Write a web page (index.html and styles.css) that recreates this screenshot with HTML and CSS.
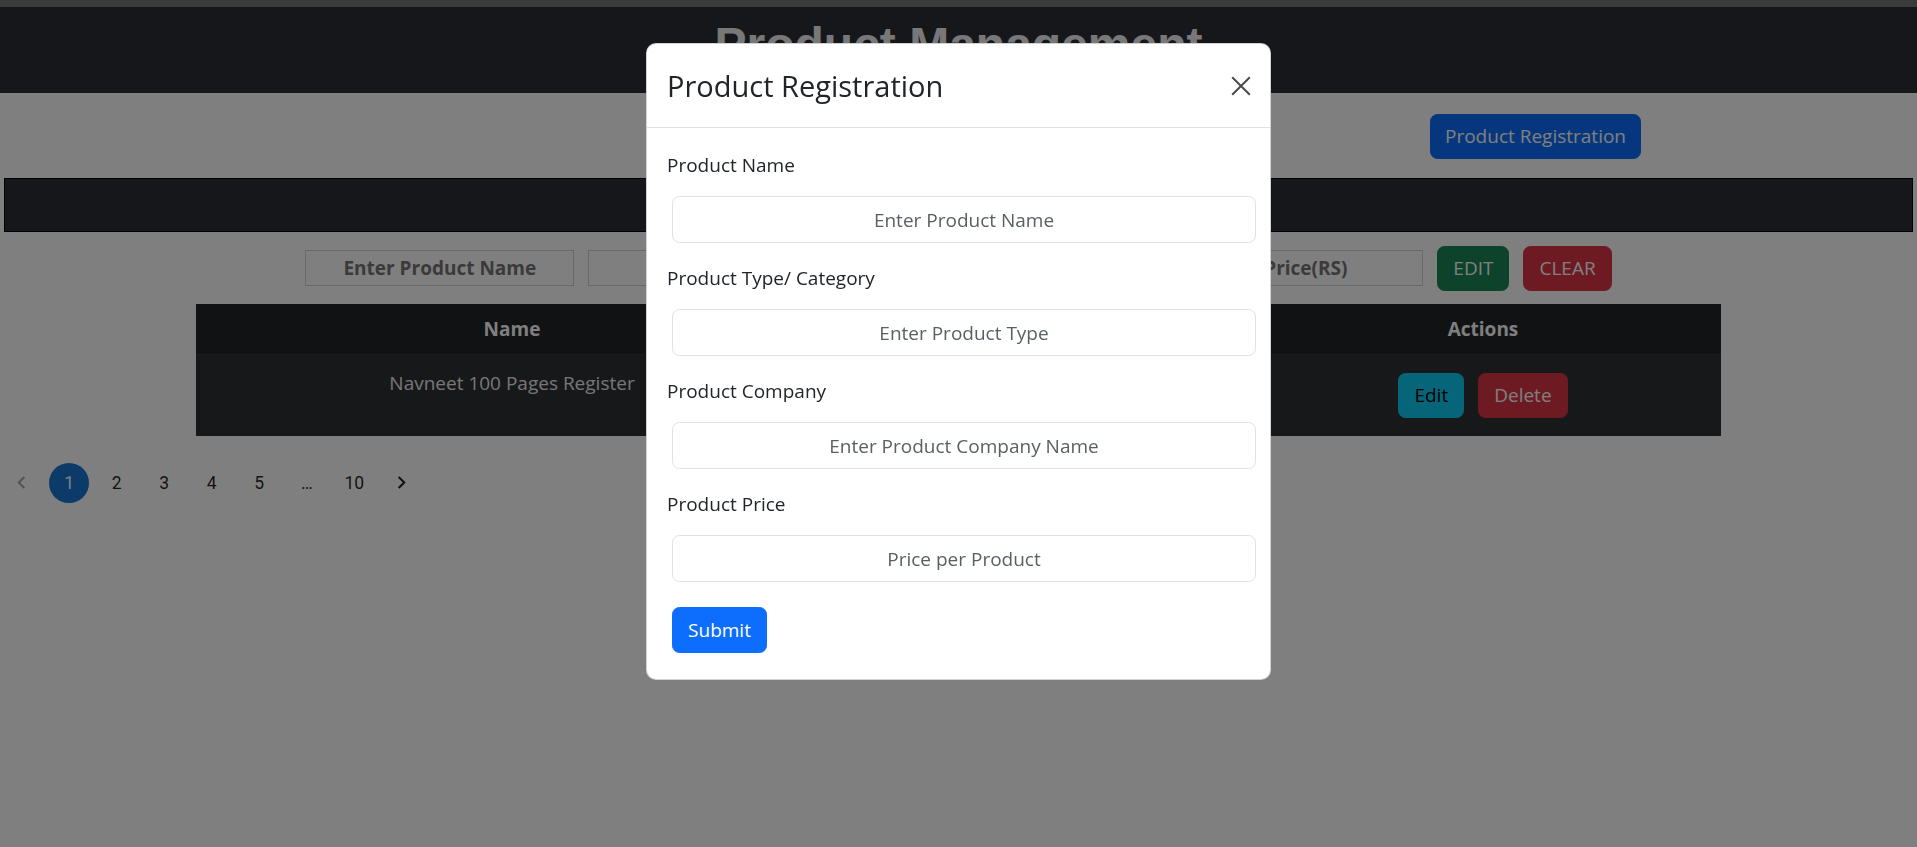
FILE: index.html
```html
<!DOCTYPE html>
<html lang="en">
<head>
<meta charset="utf-8">
<title>Product Management</title>
<link rel="stylesheet" href="styles.css">
</head>
<body>
<div class="topbar"></div>
<header class="page-header">
  <h1 class="page-title">Product Management</h1>
</header>

<div class="toolbar">
  <button class="btn btn-primary btn-register">Product Registration</button>
</div>

<div class="dark-bar"></div>

<div class="filter-row">
  <input class="filter-input" placeholder="Enter Product Name">
  <input class="filter-input" placeholder="Product Type">
  <input class="filter-input" placeholder="Company Name">
  <input class="filter-input filter-price" placeholder="Price(RS)">
  <button class="btn btn-success">EDIT</button>
  <button class="btn btn-danger">CLEAR</button>
</div>

<table class="product-table">
  <colgroup>
    <col class="col-name">
    <col class="col-mid">
    <col class="col-mid">
    <col class="col-mid">
    <col class="col-actions">
  </colgroup>
  <thead>
    <tr><th>Name</th><th>Type</th><th>Company</th><th>Price</th><th>Actions</th></tr>
  </thead>
  <tbody>
    <tr>
      <td>Navneet 100 Pages Register</td>
      <td>Stationery</td>
      <td>Navneet</td>
      <td>60</td>
      <td><div class="actions"><button class="btn btn-info">Edit</button><button class="btn btn-danger">Delete</button></div></td>
    </tr>
  </tbody>
</table>

<ul class="pagination">
  <li class="page-item disabled"><svg viewBox="0 0 24 24" class="chev"><path d="M15.41 7.41 14 6l-6 6 6 6 1.41-1.41L10.83 12z"/></svg></li>
  <li class="page-item selected">1</li>
  <li class="page-item">2</li>
  <li class="page-item">3</li>
  <li class="page-item">4</li>
  <li class="page-item">5</li>
  <li class="page-item ellipsis">…</li>
  <li class="page-item">10</li>
  <li class="page-item"><svg viewBox="0 0 24 24" class="chev"><path d="M10 6 8.59 7.41 13.17 12l-4.58 4.59L10 18l6-6z"/></svg></li>
</ul>

<div class="modal-backdrop"></div>
<div class="modal">
  <div class="modal-content">
    <div class="modal-header">
      <h4 class="modal-title">Product Registration</h4>
      <button class="btn-close" aria-label="Close">
        <svg viewBox="0 0 20 20" width="22" height="22"><path d="M2 2 L18 18 M18 2 L2 18" stroke="#4a4a4a" stroke-width="1.8" fill="none"/></svg>
      </button>
    </div>
    <form class="modal-body">
      <div class="form-group">
        <label class="form-label">Product Name</label>
        <input class="form-control" placeholder="Enter Product Name">
      </div>
      <div class="form-group">
        <label class="form-label">Product Type/ Category</label>
        <input class="form-control" placeholder="Enter Product Type">
      </div>
      <div class="form-group">
        <label class="form-label">Product Company</label>
        <input class="form-control" placeholder="Enter Product Company Name">
      </div>
      <div class="form-group">
        <label class="form-label">Product Price</label>
        <input class="form-control" placeholder="Price per Product">
      </div>
      <button type="button" class="btn btn-primary btn-submit">Submit</button>
    </form>
  </div>
</div>
</body>
</html>
```

FILE: styles.css
```css
* { box-sizing: border-box; }
html, body { margin: 0; padding: 0; }
body {
  font-family: "Open Sans", "Segoe UI", sans-serif;
  font-size: 19px;
  color: #212529;
  background: #fff;
  height: 847px;
  overflow: hidden;
}

.topbar { height: 7px; background: #757575; }

.page-header {
  background: #2c2e36;
  padding: 9px 0;
  text-align: center;
}
.page-title {
  margin: 0 0 10px;
  font-family: "Liberation Sans", Arial, sans-serif;
  font-weight: 700;
  font-size: 48px;
  line-height: 57.6px;
  color: #f0f0f0;
}

.btn {
  font-family: inherit;
  font-size: 19px;
  line-height: 29px;
  padding: 7px 15px;
  border: 1px solid transparent;
  border-radius: 7.5px;
  color: #fff;
  cursor: pointer;
}
.btn-primary { background: #0d6efd; border-color: #0d6efd; }
.btn-success { background: #198754; border-color: #198754; }
.btn-danger { background: #dc3545; border-color: #dc3545; }
.btn-info { background: #0dcaf0; border-color: #0dcaf0; color: #000; }

.toolbar {
  display: flex;
  justify-content: flex-end;
  padding-right: 276px;
  margin-top: 21px;
}
.btn-register { width: 211px; height: 45px; padding: 7px 10px; }

.dark-bar {
  margin: 19px 4px 0;
  height: 54px;
  background: #2c2e36;
  border: 1px solid #000;
}

.filter-row {
  display: flex;
  justify-content: center;
  align-items: center;
  gap: 14px;
  margin-top: 14px;
}
.filter-row .btn { height: 45px; }
.filter-input {
  width: 269px;
  height: 36px;
  border: 1px solid #d2d2d2;
  background: #fff;
  font-family: inherit;
  font-size: 19px;
  font-weight: 700;
  text-align: center;
  padding: 0 6px;
}
.filter-price { padding-left: 40px; }
.filter-input::placeholder { color: #757575; opacity: 1; }

.product-table {
  width: 1525px;
  margin: 13px auto 0;
  border-collapse: collapse;
  table-layout: fixed;
  background: #212529;
  color: #fff;
  text-align: center;
}
.col-name { width: 632px; }
.col-mid { width: 139px; }
.col-actions { width: 476px; }
.product-table th {
  padding: 10px;
  font-weight: 700;
  line-height: 30px;
  border-bottom: 1px solid #373b3e;
}
.product-table td {
  padding: 13px 10px;
  vertical-align: top;
  line-height: 30px;
  background: #2c3034;
  color: #ececec;
}
.actions {
  display: flex;
  justify-content: center;
  gap: 14px;
  margin: 5px 0;
}
.actions .btn { height: 45px; }

.pagination {
  display: flex;
  align-items: center;
  list-style: none;
  margin: 27px 0 0 -2px;
  padding: 0;
}
.page-item {
  width: 40px;
  height: 40px;
  margin: 0 3.75px;
  display: flex;
  align-items: center;
  justify-content: center;
  border-radius: 20px;
  font-family: Roboto, "Liberation Sans", sans-serif;
  font-size: 17.5px;
  color: rgba(0, 0, 0, 0.87);
}
.page-item.selected { background: #1976d2; color: #fff; }
.page-item.disabled { opacity: 0.38; }
.chev { width: 25px; height: 25px; fill: currentColor; }

.modal-backdrop {
  position: fixed;
  inset: 0;
  background: rgba(0, 0, 0, 0.5);
}
.modal {
  position: fixed;
  inset: 0;
  display: flex;
  justify-content: center;
  align-items: flex-start;
  padding-top: 43px;
}
.modal-content {
  width: 625px;
  background: #fff;
  border: 1px solid rgba(0, 0, 0, 0.175);
  border-radius: 10px;
}
.modal-header {
  display: flex;
  align-items: center;
  justify-content: space-between;
  padding: 20px;
  border-bottom: 1px solid #dee2e6;
}
.modal-title {
  margin: 0;
  font-size: 29px;
  font-weight: 500;
  line-height: 43px;
  color: #212529;
}
.btn-close {
  width: 30px;
  height: 30px;
  margin-right: -6px;
  padding: 0;
  border: 0;
  background: transparent;
  display: flex;
  align-items: center;
  justify-content: center;
}
.modal-body { padding: 22px 20px 26px; }
.form-group { margin-bottom: 20px; }
.form-label {
  display: block;
  line-height: 30px;
  margin-bottom: 16px;
  color: #212529;
}
.form-control {
  display: block;
  width: 584px;
  height: 47px;
  margin-left: 5px;
  padding: 7.5px 15px;
  font-family: inherit;
  font-size: 19px;
  line-height: 30px;
  text-align: center;
  color: #212529;
  border: 1px solid #dee2e6;
  border-radius: 7.5px;
  background: #fff;
}
.form-control::placeholder { color: #595f64; opacity: 1; }
.btn-submit {
  margin: 5px 0 0 5px;
  width: 95px;
  height: 46px;
  padding: 7px 12px;
}
```
